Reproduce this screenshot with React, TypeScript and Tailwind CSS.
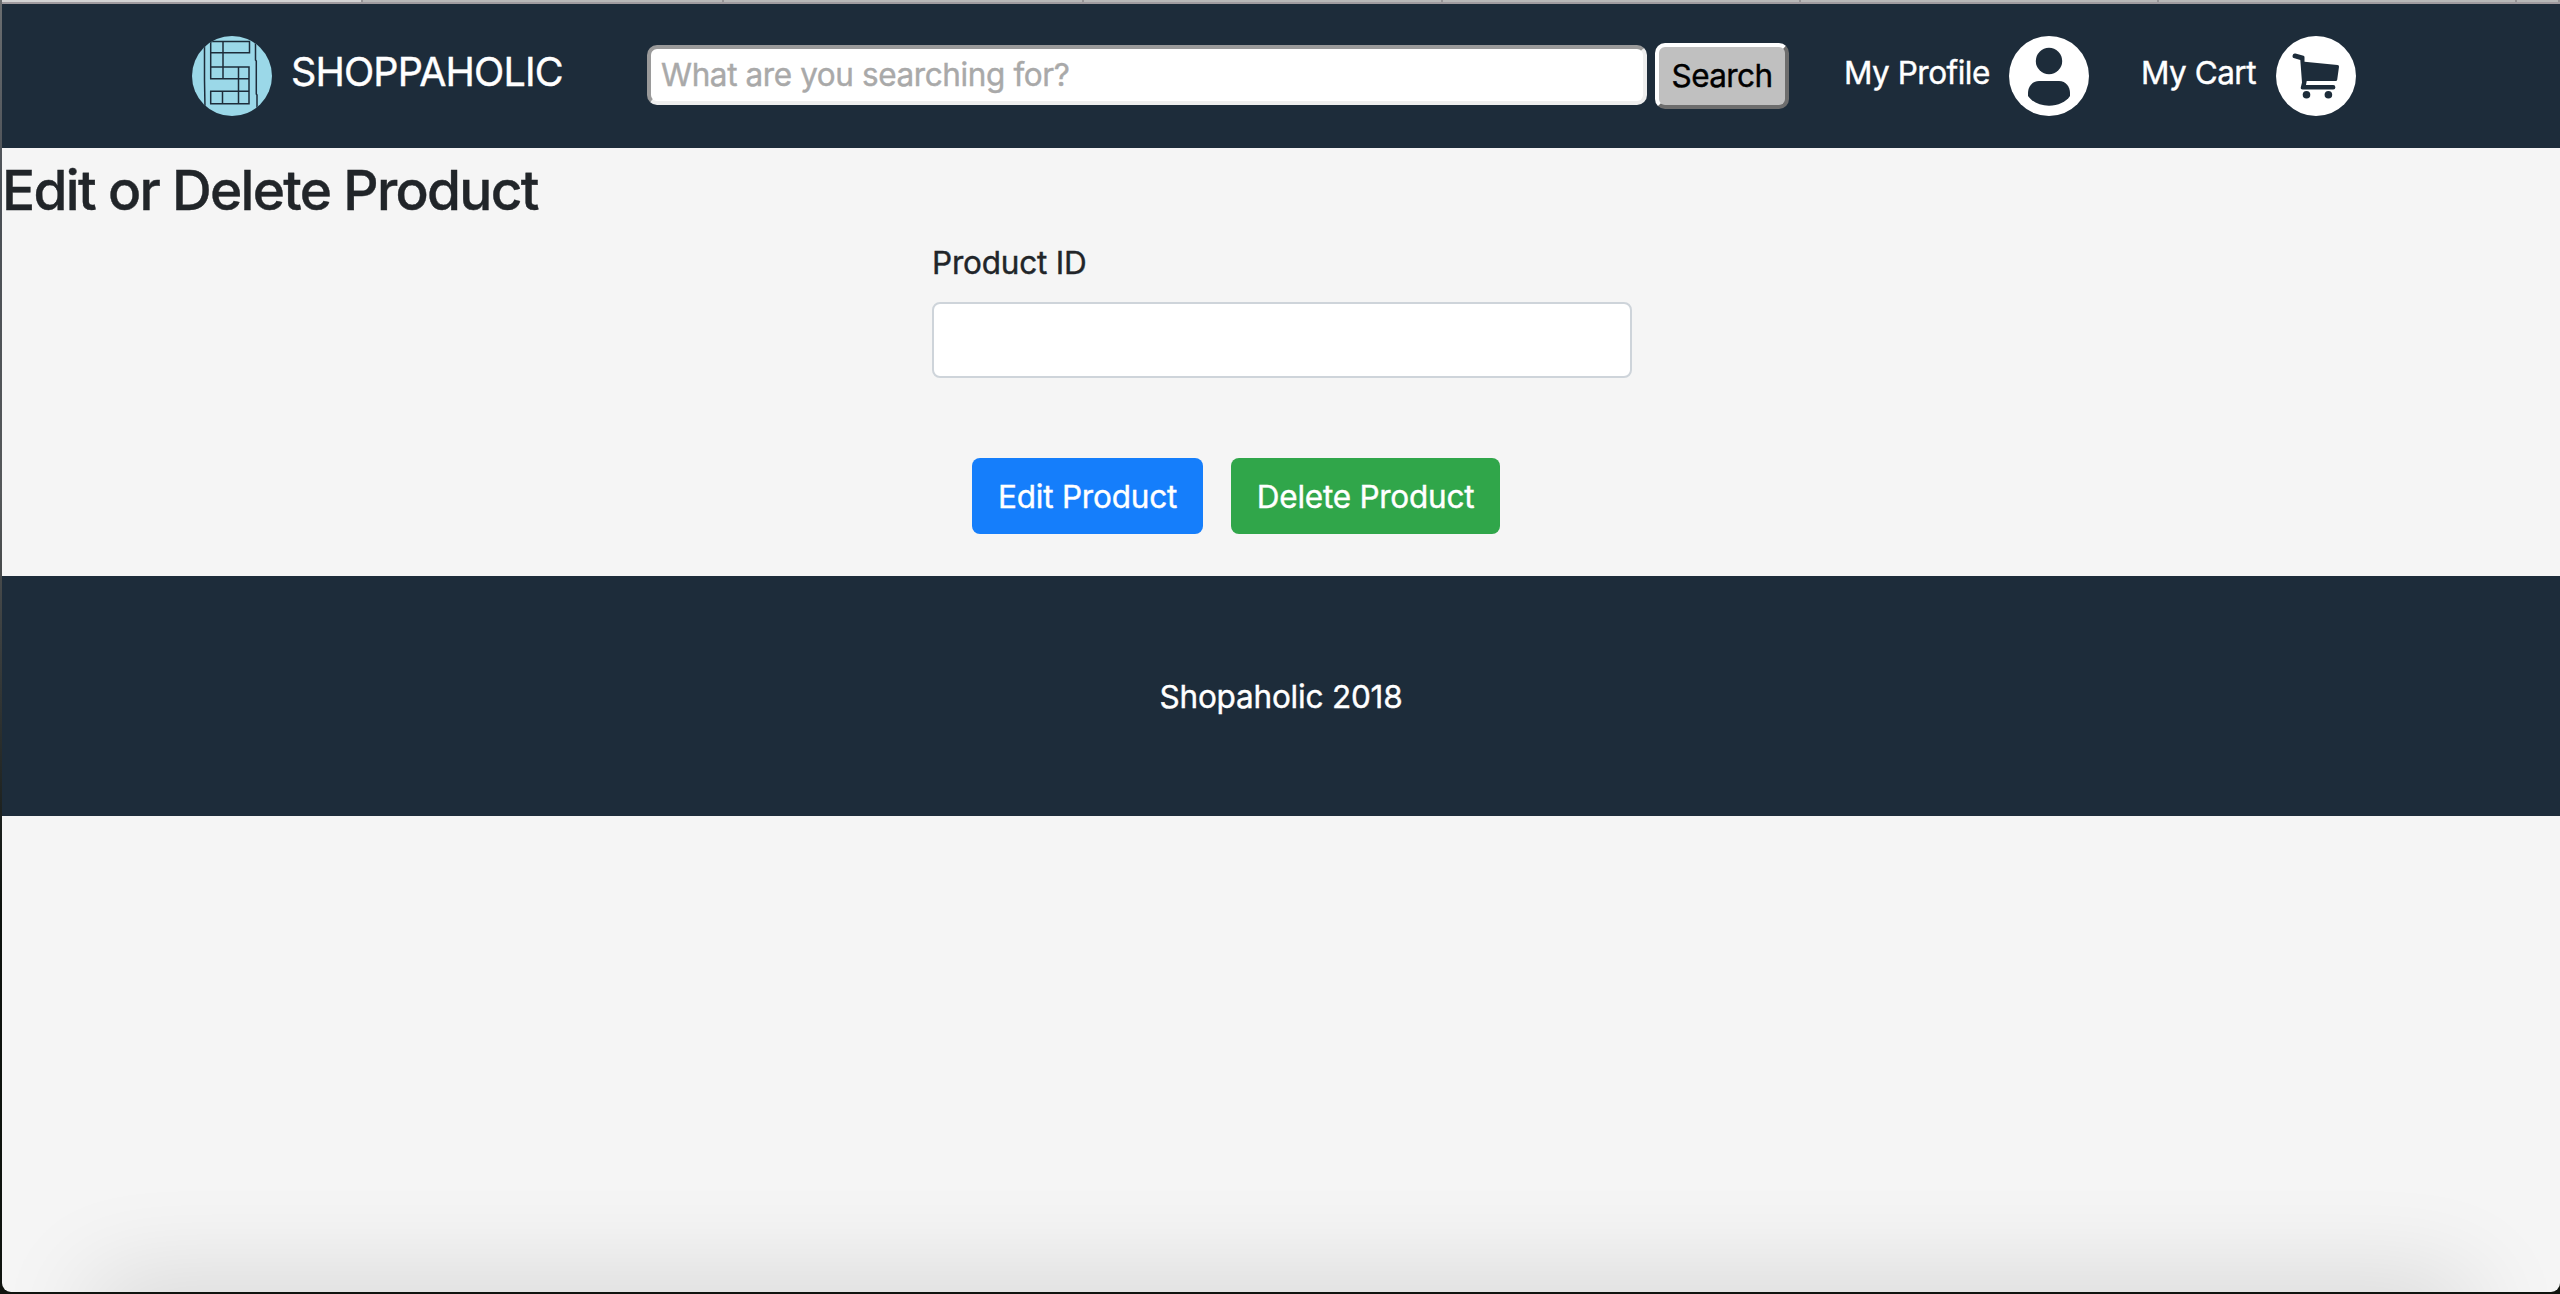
const INK = '#1d2c3a';

function Logo() {
  return (
    <svg width="80" height="80" viewBox="0 0 80 80" className="shrink-0">
      <defs>
        <clipPath id="disc">
          <circle cx="40" cy="40" r="40" />
        </clipPath>
      </defs>
      <circle cx="40" cy="40" r="40" fill="#9bd8e8" />
      <g clipPath="url(#disc)" fill="none" stroke={INK} strokeWidth="1.5">
        <path d="M12.5 8v36l.5 28M63.5 7v17l.8 1v33l.7 1v14" />
        <path d="M18.7 5.5h38.8v11.3H18.7zM18.7 5.5v37M31 5.5v37M18.7 31h38.3v11.7H18.7zM18.7 55.3h38.3v12.500H18.7zM57 31v37M46.5 31v37M30.5 55.3v12.500" />
      </g>
    </svg>
  );
}

function ProfileIcon() {
  return (
    <svg width="80" height="80" viewBox="0 0 80 80" className="shrink-0">
      <circle cx="40" cy="40" r="40" fill="#fff" />
      <circle cx="40" cy="25" r="13.2" fill={INK} />
      <path d="M30 45H50C57 45 61 51 61 57V60C57 66 49 69.700 40 69.700S23 66 19 60V57C19 51 23 45 30 45Z" fill={INK} />
    </svg>
  );
}

function CartIcon() {
  return (
    <svg width="80" height="80" viewBox="0 0 80 80" className="shrink-0">
      <circle cx="40" cy="40" r="40" fill="#fff" />
      <path d="M19.5 17.5L27.500 19.700Q28.500 20 28.500 21.200V25.800L61.500 28.900Q63.200 29.100 63 30.700L61.200 43.700Q61 45 59.700 45H30.700L30 49H57.200A2.200 2.200 0 0 1 57.200 53.400H26.700Q24.400 53.400 24.800 51.200L26 46.500L24.300 23.900L18.500 22.300A2.450 2.450 0 0 1 19.500 17.500Z" fill={INK} />
      <circle cx="30.500" cy="58.700" r="3.800" fill={INK} />
      <circle cx="52.400" cy="58.700" r="3.800" fill={INK} />
    </svg>
  );
}

const tabs = [
  'w-[361px] bg-[#d4d4d4]',
  'w-[361px] bg-[#b8b8b8]',
  'w-[360px] bg-[#b8b8b8]',
  'w-[359px] bg-[#b8b8b8]',
  'w-[358px] bg-[#b8b8b8]',
  'w-[358px] bg-[#b8b8b8]',
  'w-[358px] bg-[#b8b8b8]',
  'flex-1 bg-[#b8b8b8]',
];

export default function App() {
  return (
    <div className="h-[1294px] w-[2560px] overflow-hidden bg-[linear-gradient(to_bottom,#6b6e70_0%,#4a4f55_15%,#55585a_38%,#0d120e_70%,#10140f_100%)] pb-[2px] pl-[2px] font-['Inter','Liberation_Sans',sans-serif] text-[31.5px] font-[440] text-[#212529] [-webkit-text-stroke:0.4px]">
      <div className="relative flex h-full flex-col overflow-hidden rounded-b-[9px] bg-[#f5f5f5]">
        <div className="flex h-[4px] shrink-0 border-b-2 border-[#a09b9f]">
          {tabs.map((t, i) => (
            <div key={i} className={`${t} border-r-2 border-[#969496]`} />
          ))}
        </div>

        <header className="flex h-[144px] shrink-0 items-start bg-[#1d2c3a] pl-[190px] pt-8 text-white">
          <Logo />
          <div className="ml-[19px] mt-[8px] w-[356px] whitespace-nowrap text-[39.5px] leading-[56px] tracking-[-0.85px]">SHOPPAHOLIC</div>
          <input
            placeholder="What are you searching for?"
            className="mt-[9px] h-[60px] w-[1000px] shrink-0 rounded-[10px] border-4 border-b-[#eeeeee] border-l-[#9a9a9a] border-r-[#eeeeee] border-t-[#9a9a9a] bg-white px-[10px] pb-[2px] tracking-[-0.4px] text-black outline-none placeholder:text-[#a9a9a9]"
          />
          <button className="ml-[8px] mt-[7px] h-[66px] w-[134px] shrink-0 rounded-[10px] border-4 border-b-[#6d6d6d] border-l-white border-r-[#6d6d6d] border-t-white bg-[#c0c0c0] tracking-[-0.6px] text-black">
            Search
          </button>
          <a className="ml-[55px] mt-[13px] w-[165px] whitespace-nowrap leading-[48px] tracking-[-0.5px]">My Profile</a>
          <ProfileIcon />
          <a className="ml-[52px] mt-[13px] w-[135px] whitespace-nowrap leading-[48px] tracking-[-0.5px]">My Cart</a>
          <CartIcon />
        </header>

        <main className="h-[428px] shrink-0">
          <h1 className="pt-[9px] text-[55px] font-[540] leading-[67px] tracking-[-1.7px]">Edit or Delete Product</h1>
          <form className="ml-[930px] w-[700px] pt-[15px]">
            <label className="block leading-[48px] tracking-[-0.2px]">Product ID</label>
            <input className="mt-[15px] block h-[76px] w-full rounded-lg border-2 border-[#ced4da] bg-white px-6 outline-none" />
            <div className="mt-[80px] flex gap-7 pl-10 text-white">
              <button type="button" className="h-[76px] w-[231px] rounded-lg bg-[#157efb] pt-px tracking-[-0.2px]">Edit Product</button>
              <button type="button" className="h-[76px] w-[269px] rounded-lg bg-[#30a64a] pt-px tracking-[-0.25px]">Delete Product</button>
            </div>
          </form>
        </main>

        <footer className="flex h-[240px] shrink-0 items-center justify-center bg-[#1d2c3a] pt-px tracking-[-0.2px] text-white">
          Shopaholic 2018
        </footer>

        <div className="pointer-events-none absolute -bottom-[60px] left-[100px] right-[100px] h-[60px] shadow-[0_0_100px_10px_rgba(0,0,0,0.14)]" />
      </div>
    </div>
  );
}
